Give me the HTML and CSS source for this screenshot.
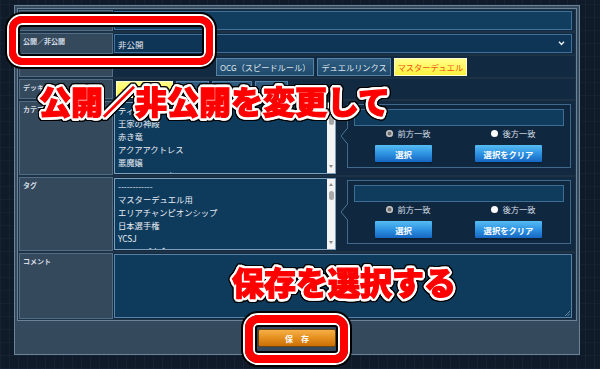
FILE: index.html
```html
<!DOCTYPE html>
<html lang="ja">
<head>
<meta charset="utf-8">
<title>デッキ編集</title>
<link rel="stylesheet" href="styles.css">
</head>
<body>
<div class="page">
  <div class="panel">
    <div class="table">
      <div class="row h21">
        <div class="label">デッキ名</div>
        <div class="value"><div class="field"></div></div>
      </div>
      <div class="row h21">
        <div class="label">公開／非公開</div>
        <div class="value"><div class="field select"><span>非公開</span><svg class="chev" viewBox="0 0 8 6" width="7" height="5"><path d="M1 1 L4 4.2 L7 1" fill="none" stroke="#e8eef4" stroke-width="1.7"/></svg></div></div>
      </div>
      <div class="row h21">
        <div class="label">ルール</div>
        <div class="value tabs rules">
          <span class="tab first">OCG（スピードルール）</span>
          <span class="tab">デュエルリンクス</span>
          <span class="tab on">マスターデュエル</span>
        </div>
      </div>
      <div class="row h20">
        <div class="label">デッキタイプ</div>
        <div class="value tabs">
          <span class="tab on w57">メイン</span>
          <span class="tab">ランク</span>
          <span class="tab">イベント</span>
          <span class="tab">フリー</span>
        </div>
      </div>
      <div class="row h74">
        <div class="label">カテゴリ</div>
        <div class="value split">
          <div class="listbox">
            <ul class="items">
              <li>ティアラメンツ</li>
              <li>王家の神殿</li>
              <li>赤き竜</li>
              <li>アクアアクトレス</li>
              <li>悪魔嬢</li>
              <li>アーティファクト</li>
            </ul>
            <div class="sbar"><span class="thumb t1"></span><span class="dn"></span></div>
          </div>
          <div class="side">
            <svg class="notch" viewBox="0 0 8 18" width="8" height="18"><polyline points="8,0.5 1,9 8,17.5" fill="#10283f" stroke="#4a7696" stroke-width="1"/></svg>
            <div class="box">
              <div class="input"></div>
              <div class="radios">
                <label><span class="radio on"></span>前方一致</label>
                <label><span class="radio"></span>後方一致</label>
              </div>
              <div class="btns">
                <span class="btn b1">選択</span>
                <span class="btn b2">選択をクリア</span>
              </div>
            </div>
          </div>
        </div>
      </div>
      <div class="row h74">
        <div class="label">タグ</div>
        <div class="value split">
          <div class="listbox">
            <ul class="items tags">
              <li>------------</li>
              <li>マスターデュエル用</li>
              <li>エリアチャンピオンシップ</li>
              <li>日本選手権</li>
              <li>YCSJ</li>
              <li>ショップ大会</li>
            </ul>
            <div class="sbar"><span class="up"></span><span class="thumb t2"></span><span class="dn"></span></div>
          </div>
          <div class="side">
            <svg class="notch" viewBox="0 0 8 18" width="8" height="18"><polyline points="8,0.5 1,9 8,17.5" fill="#10283f" stroke="#4a7696" stroke-width="1"/></svg>
            <div class="box">
              <div class="input"></div>
              <div class="radios">
                <label><span class="radio on"></span>前方一致</label>
                <label><span class="radio"></span>後方一致</label>
              </div>
              <div class="btns">
                <span class="btn b1">選択</span>
                <span class="btn b2">選択をクリア</span>
              </div>
            </div>
          </div>
        </div>
      </div>
      <div class="row h66">
        <div class="label">コメント</div>
        <div class="value"><div class="textarea"><svg class="grip" viewBox="0 0 5 5" width="5" height="5"><path d="M5 0 L0 5 M5 2.5 L2.5 5" stroke="#7f9bb3" stroke-width="0.8"/></svg></div></div>
      </div>
    </div>
    <div class="footer"><span class="save">保　存</span></div>
  </div>
</div>

<div class="hl hl1"></div>
<div class="hl hl2"></div>
<div class="anno a1">公開／非公開を変更して</div>
<div class="anno a2">保存を選択する</div>
</body>
</html>
```

FILE: styles.css
```css
* { box-sizing: border-box; }
html, body { margin: 0; padding: 0; }
body {
  width: 600px;
  height: 369px;
  overflow: hidden;
  position: relative;
  font-family: "Noto Sans CJK JP", "Noto Sans", sans-serif;
  background-color: #0f1b29;
  background-image:
    repeating-linear-gradient(90deg, rgba(70,100,130,0.10) 0 1px, transparent 1px 9px),
    repeating-linear-gradient(0deg, rgba(70,100,130,0.08) 0 1px, transparent 1px 13px);
}
.page { padding: 5px 0 0 14px; }
.panel {
  width: 566px;
  height: 350px;
  border: 1px solid #6a8399;
  padding: 2px;
  background: #35495c;
  display: flex;
  flex-direction: column;
}
.table {
  border: 1px solid #6a8399;
  padding: 1px;
  display: flex;
  flex-direction: column;
  gap: 2px;
  background: #1e3246;
}
.row { display: grid; grid-template-columns: 94px 1fr; }
.h21 { height: 21px; }
.h20 { height: 20px; }
.h74 { height: 74px; }
.h66 { height: 66px; }
.label {
  background: #35495c;
  border: 1px solid #536d86;
  padding: 3px 2px 0 3px;
  font-size: 7px;
  line-height: 9px;
  font-weight: bold;
  color: #d3dce5;
  white-space: nowrap;
  overflow: hidden;
}
.value {
  background: #112941;
  padding: 1px 3px 1px 1px;
  display: flex;
}
.field {
  flex: 1;
  background: #113d5e;
  border: 1px solid #41709a;
}
.select {
  background: #0e3456;
  display: flex;
  align-items: center;
  justify-content: space-between;
  padding: 0 6px 0 3px;
  font-size: 8.5px;
  color: #e9eef4;
}
.chev { display: block; }
.tabs { gap: 3px; padding: 2px 3px 1px 3px; align-items: stretch; }
.rules .first { margin-left: 100px; }
.tab {
  display: flex;
  align-items: center;
  padding: 0 3px;
  font-size: 8.2px;
  color: #dbe4ec;
  background: linear-gradient(#2f5c80, #204a6c);
  border: 1px solid #5583a8;
  white-space: nowrap;
}
.tab.on {
  background: linear-gradient(#ffff8a, #fff23c);
  border-color: #fffbd0;
  color: #f05416;
}
.w57 { width: 57px; }
.split { align-items: flex-start; }
.listbox {
  width: 222px;
  height: 72px;
  background: #0e3a5c;
  border: 1px solid #7e9fba;
  display: flex;
  overflow: hidden;
}
.items {
  flex: 1;
  list-style: none;
  margin: 0;
  padding: 1px 0 0 3px;
  font-size: 8.3px;
  line-height: 13px;
  color: #e6edf4;
}
.items.tags { padding-top: 1px; }
.sbar {
  width: 8px;
  background: #f4f4f4;
  position: relative;
}
.sbar .up, .sbar .dn {
  position: absolute;
  left: 2px;
  width: 0; height: 0;
  border-left: 2px solid transparent;
  border-right: 2px solid transparent;
}
.sbar .up { top: 4px; border-bottom: 3px solid #8a8a8a; }
.sbar .dn { bottom: 5px; border-top: 3px solid #8a8a8a; }
.thumb {
  position: absolute;
  left: 1.5px;
  width: 5px;
  border-radius: 3px;
  background: #a8a8a8;
}
.t1 { top: 10px; height: 12px; }
.t2 { top: 12px; height: 9px; }
.side {
  flex: 1;
  display: flex;
  align-items: center;
  margin-top: 2px;
  padding: 0 1px 0 4px;
}
.notch { display: block; margin-right: -1px; position: relative; z-index: 1; }
.box {
  flex: 1;
  height: 64px;
  background: #10283f;
  border: 1px solid #3f6a8b;
  padding: 4px 6px 0 6px;
}
.input {
  height: 17px;
  background: #0f3b5c;
  border: 1px solid #3d6d92;
}
.radios {
  display: grid;
  grid-template-columns: 1fr 1fr;
  height: 14px;
  align-items: center;
  font-size: 8.3px;
  color: #d6dfe8;
}
.radios label { display: flex; align-items: center; justify-content: center; gap: 4px; padding-left: 4px; }
.radio {
  width: 7px; height: 7px;
  border-radius: 50%;
  background: #fbfbfb;
}
.radio.on {
  background: #6e6e6e;
  box-shadow: inset 0 0 0 1.5px #c4c4c4;
}
.btns {
  display: grid;
  grid-template-columns: 1fr 1fr;
  margin-top: 5px;
  justify-items: center;
}
.btn {
  height: 17px;
  display: flex;
  align-items: center;
  justify-content: center;
  font-size: 8.3px;
  font-weight: bold;
  color: #ffffff;
  background: linear-gradient(#56bdf3, #2e93e2 50%, #1667c2);
  border-radius: 1px;
  box-shadow: 0 2px 0 #0a2137;
}
.b1 { width: 57px; margin-left: -6px; }
.b2 { width: 67px; margin-left: -6px; }
.textarea {
  flex: 1;
  background: #0e3a5c;
  border: 1px solid #5a82a5;
  position: relative;
}
.grip { position: absolute; right: 1px; bottom: 1px; }
.footer {
  flex: 1;
  display: flex;
  justify-content: center;
  padding-top: 8px;
}
.save {
  width: 78px;
  height: 18px;
  display: flex;
  align-items: center;
  justify-content: center;
  font-size: 8px;
  font-weight: bold;
  color: #fff;
  background: linear-gradient(#f7b049, #e48f1e 50%, #cc7008);
  border: 1px solid #6b440e;
  border-radius: 2px;
}

.hl {
  position: absolute;
  border-style: solid;
  border-color: #ff0000;
  box-shadow: 0 0 0 2px #ffffff, 0 0 0 4px #000000, inset 0 0 0 2px #ffffff, inset 0 0 0 4px #000000;
}
.hl1 { left: 9px; top: 16px; width: 204px; height: 49px; border-width: 7px; border-radius: 13px; }
.hl2 { left: 245px; top: 315px; width: 103px; height: 48px; border-width: 8px; border-radius: 13px; }

.anno {
  position: absolute;
  font-family: "Noto Sans CJK JP", sans-serif;
  font-weight: 900;
  font-size: 32px;
  line-height: 1;
  color: #ff0000;
  white-space: nowrap;
  -webkit-text-stroke: 1.2px #ff0000;
  text-shadow:
    1.5px 0 #fff, -1.5px 0 #fff, 0 1.5px #fff, 0 -1.5px #fff,
    1px 1px #fff, -1px 1px #fff, 1px -1px #fff, -1px -1px #fff,
    3px 0 #fff, 2.77px 1.15px #fff, 2.12px 2.12px #fff, 1.15px 2.77px #fff,
    0 3px #fff, -1.15px 2.77px #fff, -2.12px 2.12px #fff, -2.77px 1.15px #fff,
    -3px 0 #fff, -2.77px -1.15px #fff, -2.12px -2.12px #fff, -1.15px -2.77px #fff,
    0 -3px #fff, 1.15px -2.77px #fff, 2.12px -2.12px #fff, 2.77px -1.15px #fff;
  filter: drop-shadow(1px 0 0 #000) drop-shadow(-1px 0 0 #000) drop-shadow(0 1px 0 #000) drop-shadow(0 -1px 0 #000);
}
.a1 { left: 39px; top: 84px; }
.a2 { left: 232px; top: 265px; }
```
